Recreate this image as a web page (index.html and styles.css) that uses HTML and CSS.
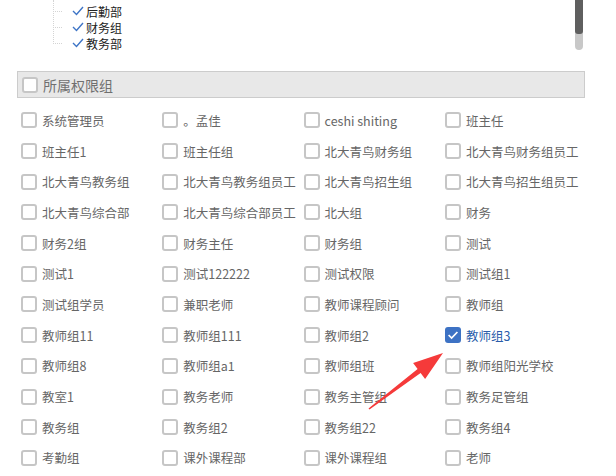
FILE: index.html
```html
<!DOCTYPE html>
<html>
<head>
    <title>权限组</title>
    <link rel="stylesheet" href="styles.css">
</head>
<body>
    <!-- Department tree (bottom of a scrolled list) -->
    <div class="tree-box">
        <div class="tree">
            <div class="tree-row"><span class="tree-line"></span><svg class="tick" width="12" height="10" viewBox="0 0 12 10"><path d="M1 5 L4.5 8.5 L11 1" fill="none" stroke="#3d74c6" stroke-width="1.4"/></svg>后勤部</div>
            <div class="tree-row"><span class="tree-line"></span><svg class="tick" width="12" height="10" viewBox="0 0 12 10"><path d="M1 5 L4.5 8.5 L11 1" fill="none" stroke="#3d74c6" stroke-width="1.4"/></svg>财务组</div>
            <div class="tree-row"><span class="tree-line"></span><svg class="tick" width="12" height="10" viewBox="0 0 12 10"><path d="M1 5 L4.5 8.5 L11 1" fill="none" stroke="#3d74c6" stroke-width="1.4"/></svg>教务部</div>
        </div>
        <div class="scrollbar"><div class="thumb"></div></div>
    </div>

    <!-- Group header -->
    <div class="group-head">
        <span class="box"></span>
        <span class="group-title">所属权限组</span>
    </div>

    <!-- Permission groups -->
    <div class="group-list">
        <label class="item"><span class="box"></span>系统管理员</label>
        <label class="item"><span class="box"></span>。孟佳</label>
        <label class="item"><span class="box"></span>ceshi shiting</label>
        <label class="item"><span class="box"></span>班主任</label>

        <label class="item"><span class="box"></span>班主任1</label>
        <label class="item"><span class="box"></span>班主任组</label>
        <label class="item"><span class="box"></span>北大青鸟财务组</label>
        <label class="item"><span class="box"></span>北大青鸟财务组员工</label>

        <label class="item"><span class="box"></span>北大青鸟教务组</label>
        <label class="item"><span class="box"></span>北大青鸟教务组员工</label>
        <label class="item"><span class="box"></span>北大青鸟招生组</label>
        <label class="item"><span class="box"></span>北大青鸟招生组员工</label>

        <label class="item"><span class="box"></span>北大青鸟综合部</label>
        <label class="item"><span class="box"></span>北大青鸟综合部员工</label>
        <label class="item"><span class="box"></span>北大组</label>
        <label class="item"><span class="box"></span>财务</label>

        <label class="item"><span class="box"></span>财务2组</label>
        <label class="item"><span class="box"></span>财务主任</label>
        <label class="item"><span class="box"></span>财务组</label>
        <label class="item"><span class="box"></span>测试</label>

        <label class="item"><span class="box"></span>测试1</label>
        <label class="item"><span class="box"></span>测试122222</label>
        <label class="item"><span class="box"></span>测试权限</label>
        <label class="item"><span class="box"></span>测试组1</label>

        <label class="item"><span class="box"></span>测试组学员</label>
        <label class="item"><span class="box"></span>兼职老师</label>
        <label class="item"><span class="box"></span>教师课程顾问</label>
        <label class="item"><span class="box"></span>教师组</label>

        <label class="item"><span class="box"></span>教师组11</label>
        <label class="item"><span class="box"></span>教师组111</label>
        <label class="item"><span class="box"></span>教师组2</label>
        <label class="item checked">
            <span class="box">
                <svg width="16" height="16" viewBox="0 0 16 16"><path d="M3.6 8 L6.6 11 L12.4 5" fill="none" stroke="#fff" stroke-width="1.7"/></svg>
            </span>教师组3
        </label>

        <label class="item"><span class="box"></span>教师组8</label>
        <label class="item"><span class="box"></span>教师组a1</label>
        <label class="item"><span class="box"></span>教师组班</label>
        <label class="item"><span class="box"></span>教师组阳光学校</label>

        <label class="item"><span class="box"></span>教室1</label>
        <label class="item"><span class="box"></span>教务老师</label>
        <label class="item"><span class="box"></span>教务主管组</label>
        <label class="item"><span class="box"></span>教务足管组</label>

        <label class="item"><span class="box"></span>教务组</label>
        <label class="item"><span class="box"></span>教务组2</label>
        <label class="item"><span class="box"></span>教务组22</label>
        <label class="item"><span class="box"></span>教务组4</label>

        <label class="item"><span class="box"></span>考勤组</label>
        <label class="item"><span class="box"></span>课外课程部</label>
        <label class="item"><span class="box"></span>课外课程组</label>
        <label class="item"><span class="box"></span>老师</label>
    </div>

    <!-- Red annotation arrow pointing at the checked group -->
    <svg class="arrow" width="616" height="476" viewBox="0 0 616 476">
        <polygon fill="#f53a3a" points="369.5,409.6 420.6,373.1 425.1,379.1 443,353 413.1,363.1 417.6,369.1 368.5,408.4"/>
    </svg>
</body>
</html>
```

FILE: styles.css
```css
/* Page */
body {
    margin: 0;
    background-color: #ffffff;
    font-family: "Noto Sans CJK SC", "Microsoft YaHei", sans-serif;
    color: #666666;
    overflow: hidden;
    position: relative;
    height: 476px;
}

/* Tree at the top */
.tree-box {
    display: flex;
    height: 56px;
    padding-right: 33px;
}

.tree {
    flex: 1;
    padding-top: 3px;
    padding-left: 53px;
    position: relative;
}

.tree::before {
    content: "";
    position: absolute;
    left: 53px;
    top: 0;
    height: 44px;
    border-left: 1px dotted #d4d4d4;
}

.tree-row {
    display: flex;
    align-items: center;
    height: 16px;
    font-size: 12px;
    color: #222222;
}

.tree-line {
    width: 9px;
    border-top: 1px dotted #d4d4d4;
    margin-right: 10px;
}

.tick {
    margin-right: 2px;
}

.scrollbar {
    width: 8px;
    height: 50px;
    background-color: #c8c8c8;
    border-radius: 0 0 4px 4px;
}

.scrollbar .thumb {
    height: 34px;
    background-color: #5f5f5f;
    border-radius: 0 0 3px 3px;
}

/* Header bar */
.group-head {
    display: flex;
    align-items: center;
    height: 25px;
    margin: 15px 31px 0 17px;
    padding-left: 4px;
    background-color: #e8e8e8;
    border: 1px solid #cccccc;
}

.group-title {
    margin-left: 5px;
    font-size: 14px;
    color: #707070;
}

/* Checkbox */
.box {
    width: 16px;
    height: 16px;
    box-sizing: border-box;
    border: 2px solid #c6c6c6;
    border-radius: 3px;
    background-color: #ffffff;
    flex-shrink: 0;
}

/* Grid of groups */
.group-list {
    display: grid;
    grid-template-columns: repeat(4, 141.3px);
    grid-auto-rows: 30.7px;
    padding-left: 21px;
    margin-top: 7px;
}

.item {
    display: flex;
    align-items: center;
    font-size: 12.5px;
    white-space: nowrap;
}

.item .box {
    margin-right: 5px;
}

.item.checked {
    color: #2a5caa;
}

.item.checked .box {
    border: none;
    background-color: #3d72c4;
}

.item.checked svg {
    display: block;
}

/* Annotation */
.arrow {
    position: absolute;
    left: 0;
    top: 0;
    pointer-events: none;
}
```
